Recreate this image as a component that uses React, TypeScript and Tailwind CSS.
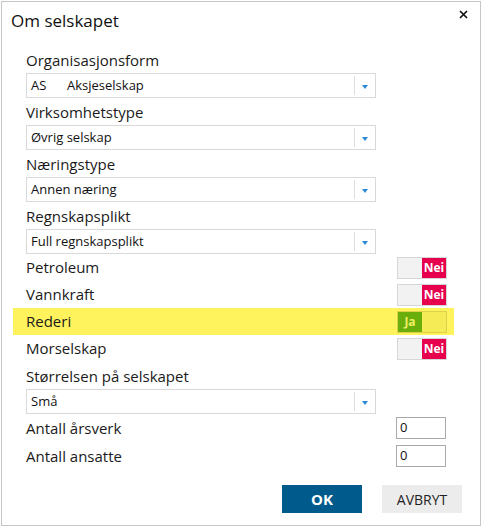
import React from "react";

const font = { fontFamily: '"Open Sans", "Noto Sans", sans-serif' };

function Arrow() {
  return (
    <svg width="6" height="4" viewBox="0 0 6 4" className="block">
      <path d="M0 0 L6 0 L3 4 Z" fill="#2b8ad6" />
    </svg>
  );
}

function Select({ children }: { children: React.ReactNode }) {
  return (
    <div className="w-[350px] h-[25px] border border-[#d9d9d9] flex items-stretch bg-white">
      <div className="flex-1 flex items-center pl-[4px] text-[13px] text-[#111]">{children}</div>
      <div className="w-[21px] flex items-center justify-center my-[2px] border-l border-[#dedede]">
        <div className="mt-[3px]">
          <Arrow />
        </div>
      </div>
    </div>
  );
}

function Field({ label, children }: { label: string; children: React.ReactNode }) {
  return (
    <div>
      <div className="h-[27px] flex items-end pb-[3px] text-[15px] leading-[20px] text-[#1a1a1a]">{label}</div>
      <Select>{children}</Select>
    </div>
  );
}

function ToggleNei() {
  return (
    <div className="w-[50px] h-[22px] border border-[#d6d6d6] flex">
      <div className="w-[24px] bg-[#f2f2f2]" />
      <div className="flex-1 bg-[#e6004e] text-white font-bold text-[12px] flex items-center justify-center">
        Nei
      </div>
    </div>
  );
}

function ToggleJa() {
  return (
    <div className="w-[50px] h-[22px] border border-[#dcd24a] flex">
      <div className="w-[24px] bg-[#6aae0c] text-[#eef064] font-bold text-[12px] flex items-center justify-center">
        Ja
      </div>
      <div className="flex-1 bg-[#f4eb56]" />
    </div>
  );
}

function ToggleRow({ label, on }: { label: string; on?: boolean }) {
  return (
    <div
      className={
        on
          ? "h-[27px] flex items-center justify-between bg-[#fef35c] ml-[-13px] mr-[-7px] pl-[13px] pr-[7px]"
          : "h-[27px] flex items-center justify-between"
      }
    >
      <span className="text-[15px] text-[#1a1a1a]">{label}</span>
      {on ? <ToggleJa /> : <ToggleNei />}
    </div>
  );
}

function InputRow({ label }: { label: string }) {
  return (
    <div className="h-[28px] flex items-center justify-between">
      <span className="text-[15px] text-[#1a1a1a]">{label}</span>
      <div className="w-[50px] h-[22px] border border-[#a9a9a9] flex items-center pl-[3px] text-[13px] text-[#111] mr-[1px]">
        0
      </div>
    </div>
  );
}

export default function App() {
  return (
    <div className="w-[482px] h-[527px] bg-white p-[1px]" style={font}>
      <div className="relative w-[480px] h-[525px] border border-[#c6c6c6] bg-white">
        <div className="h-[44px] pl-[9px] pt-[7px] text-[17px] leading-[24px] text-[#111]">Om selskapet</div>
        <svg width="9" height="9" viewBox="0 0 9 9" className="absolute left-[457px] top-[8px]">
          <path d="M1 1 L8 8 M8 1 L1 8" stroke="#111" strokeWidth="1.7" />
        </svg>
        <div className="pl-[24px] w-[445px]">
          <Field label="Organisasjonsform">
            <span className="w-[36px]">AS</span>
            <span>Aksjeselskap</span>
          </Field>
          <Field label="Virksomhetstype">Øvrig selskap</Field>
          <Field label="Næringstype">Annen næring</Field>
          <Field label="Regnskapsplikt">Full regnskapsplikt</Field>
          <ToggleRow label="Petroleum" />
          <ToggleRow label="Vannkraft" />
          <ToggleRow label="Rederi" on />
          <ToggleRow label="Morselskap" />
          <Field label="Størrelsen på selskapet">Små</Field>
          <InputRow label="Antall årsverk" />
          <InputRow label="Antall ansatte" />
        </div>
        <div className="flex justify-end gap-[20px] pr-[18px] mt-[15px]">
          <button className="w-[80px] h-[28px] bg-[#005a8c] text-white font-bold text-[15px]">OK</button>
          <button className="w-[80px] h-[28px] bg-[#ececec] text-[#1f1f1f] text-[14px]">AVBRYT</button>
        </div>
      </div>
    </div>
  );
}
